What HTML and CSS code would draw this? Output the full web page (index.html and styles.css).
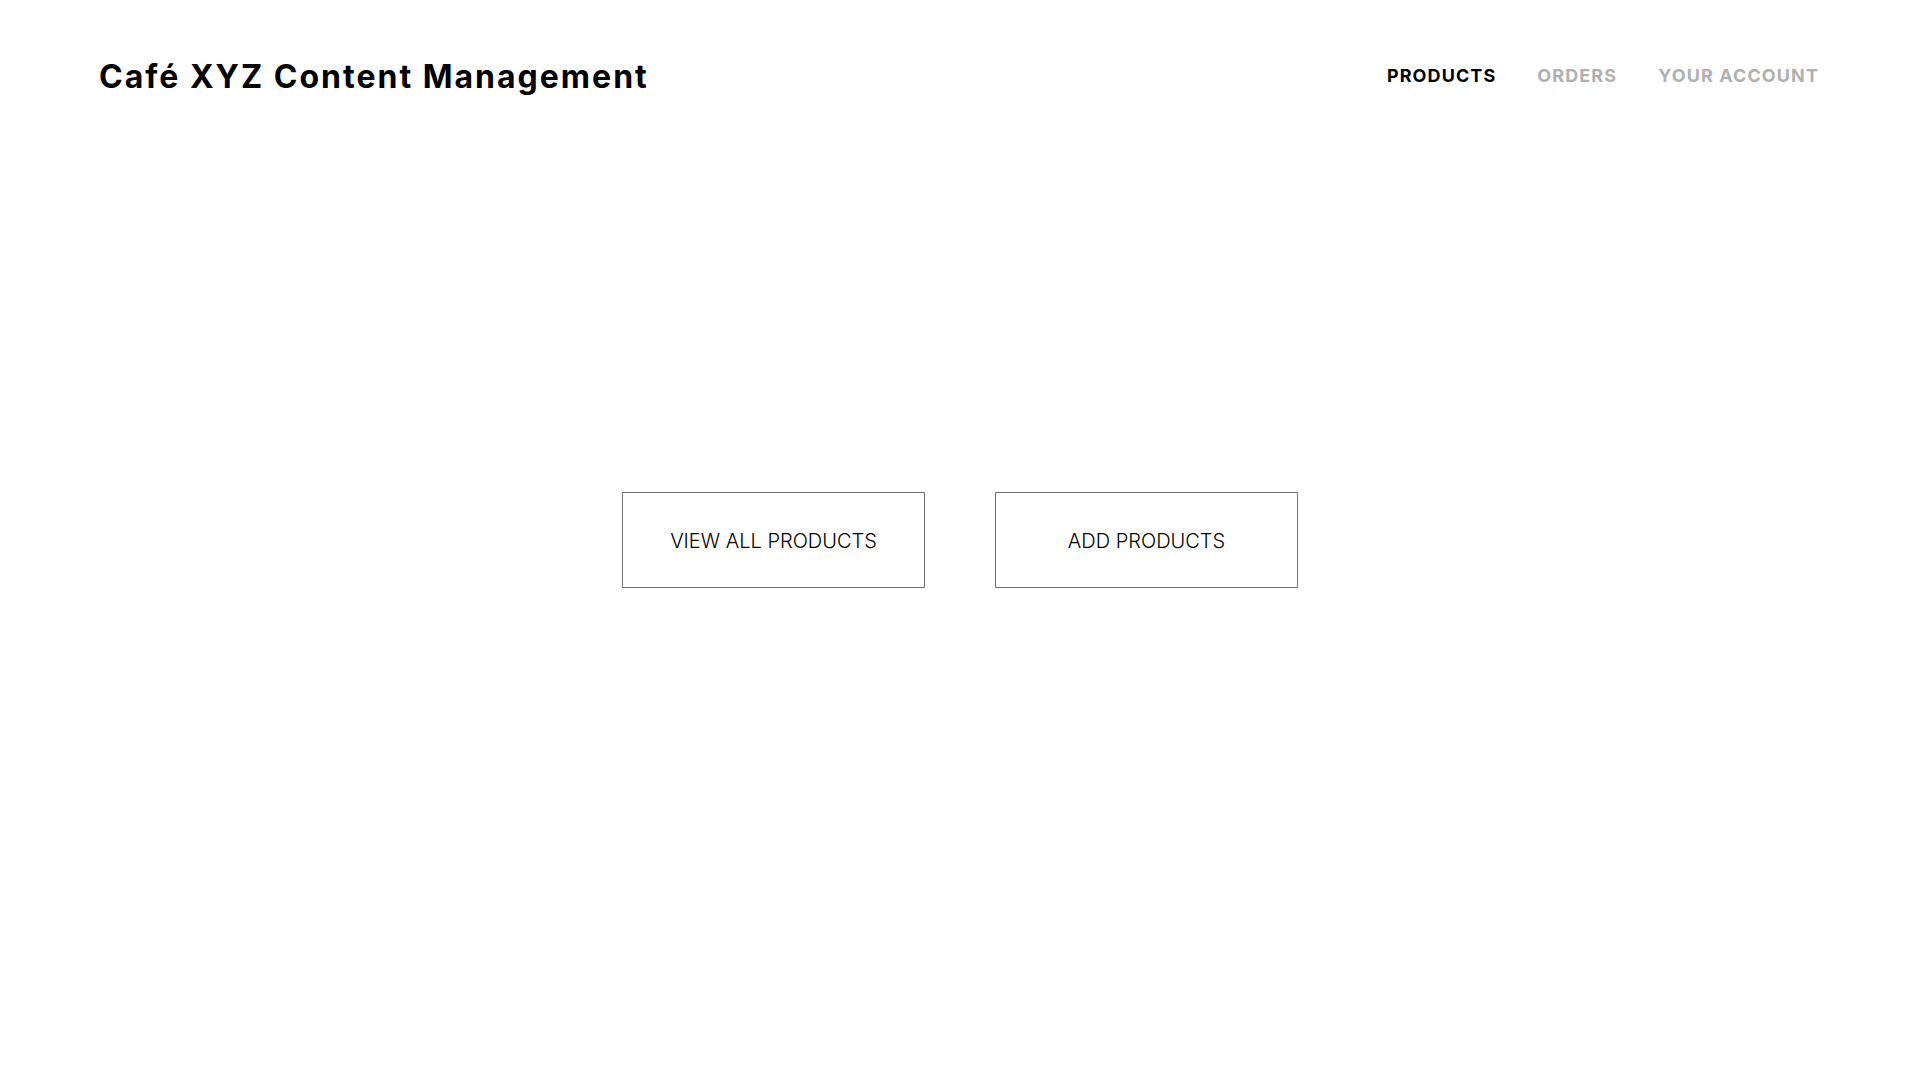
FILE: index.html
```html
<!DOCTYPE html>
<html lang="en">
<head>
<meta charset="utf-8">
<title>Café XYZ Content Management</title>
<link rel="stylesheet" href="styles.css">
</head>
<body>
<header class="topbar">
  <h1 class="brand">Café XYZ Content Management</h1>
  <nav class="nav">
    <a class="nav-link active" href="#">PRODUCTS</a>
    <a class="nav-link" href="#">ORDERS</a>
    <a class="nav-link" href="#">YOUR ACCOUNT</a>
  </nav>
</header>
<main class="actions">
  <a class="action" href="#">VIEW ALL PRODUCTS</a>
  <a class="action" href="#">ADD PRODUCTS</a>
</main>
</body>
</html>
```
FILE: styles.css
```css
* { box-sizing: border-box; }
html, body { margin: 0; padding: 0; background: #fff; }
body { font-family: Inter, "Open Sans", "Liberation Sans", sans-serif; color: #000; }
.topbar {
  display: flex; align-items: center; justify-content: space-between;
  padding: 40px 101px 0 99px; height: 112px;
}
.brand { margin: 0; padding-top: 2px; font-size: 32px; font-weight: 700; letter-spacing: 2px; line-height: 1; }
.nav { display: flex; gap: 41px; }
.nav-link { font-size: 18px; font-weight: 700; letter-spacing: 1.1px; line-height: 1; color: #b0b0b0; text-decoration: none; }
.nav-link.active { color: #000; }
.actions { display: flex; justify-content: center; gap: 70px; margin-top: 380px; }
.action {
  width: 303px; height: 96px; padding-top: 2px; border: 1px solid #707070; display: flex;
  align-items: center; justify-content: center; font-size: 20px; font-weight: 300;
  color: #000; text-decoration: none;
}
```
